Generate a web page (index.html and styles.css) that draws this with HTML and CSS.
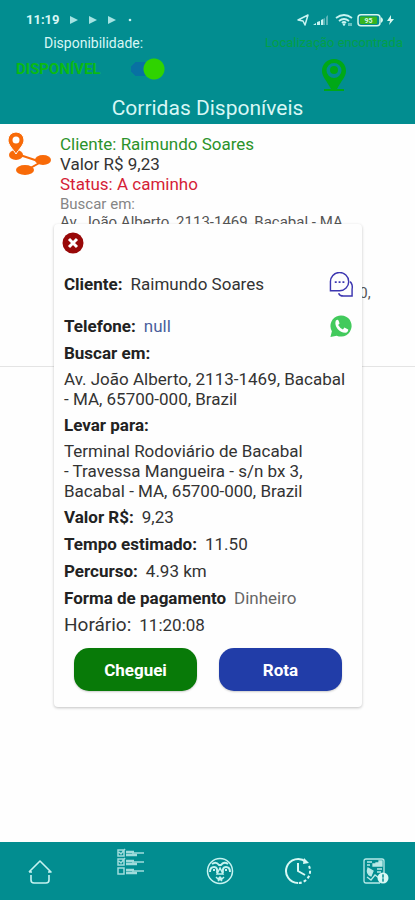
FILE: index.html
```html
<!DOCTYPE html>
<html lang="pt-BR">
<head>
<meta charset="utf-8">
<meta name="viewport" content="width=device-width, initial-scale=1">
<title>Corridas Disponíveis</title>
<link rel="stylesheet" href="styles.css">
</head>
<body>
<header class="header">
  <div class="status">
    <span class="clock">11:19</span>
    <svg class="plays" viewBox="0 0 66 10"><path d="M1 1v8l8-4zM20 1v8l8-4zM39 1v8l8-4z" fill="#a5e3e2"/><circle cx="61" cy="5" r="1.3" fill="#c8f3f1"/></svg>
    <svg class="signals" viewBox="0 0 98 14" fill="none">
      <path d="M1 7 11 2 8 12 6 8z" stroke="#c8f3f1" stroke-width="1.5" stroke-linejoin="round"/>
      <path d="M16 12l3-2v2zM20 12V9l3-1v4zM24 12V7l2-1v6z" fill="#c8f3f1"/>
      <path d="M26 12V6l2-1v7zM29 12V4l2-2v10z" fill="#5bb5b8"/>
      <path d="M39 5q8-6 16 0M42 8q5-4 10 0M45 10q2-2 4 0" stroke="#c8f3f1" stroke-width="1.8"/>
      <circle cx="47" cy="11.500" r="1.200" fill="#c8f3f1"/><path d="M52 10v3M54 10v3" stroke="#c8f3f1"/>
      <rect x="61" y="1.700" width="22" height="11" rx="3" stroke="#d8f7ef" stroke-width="1.500"/>
      <rect x="63" y="3.500" width="17" height="7.500" rx="1" fill="#35b51f"/>
      <path d="M84 4q4 3 0 6z" fill="#d8f7ef"/>
      <text x="71.500" y="10" text-anchor="middle" class="battery">95</text>
      <path d="m94 2-4 6h3l-1 4 5-6h-3z" fill="#d8f7ef"/>
    </svg>
  </div>
  <div class="panels">
    <div class="availability">
      <span class="caption" id="avail">Disponibilidade:</span>
      <div class="toggle-row">
        <span class="available">DISPONÍVEL</span>
        <input class="switch" type="checkbox" role="switch" checked aria-labelledby="avail">
      </div>
    </div>
    <div class="location">
      <span class="caption found">Localização encontrada</span>
      <svg class="pin" viewBox="0 0 26 34"><path fill="#00a817" fill-rule="evenodd" d="M13 1C6 1 1 6 1 13c0 6 5 10 9 18h6c4-8 9-12 9-18C25 6 20 1 13 1zm0 4a7.500 7.500 0 1 1 0 15 7.500 7.500 0 0 1 0-15z"/><circle cx="13" cy="12" r="4" fill="#00a817"/><path d="M3 32h20" stroke="#00a817" stroke-width="2"/></svg>
    </div>
  </div>
  <h1 class="title">Corridas Disponíveis</h1>
</header>
<main class="main">
  <article class="ride">
    <svg class="route" viewBox="0 0 44 46"><g fill="#f86a08" stroke="#f86a08"><path d="M9 22 33 30 17 39" fill="none" stroke-width="2"/><ellipse cx="8" cy="23" rx="7" ry="5" stroke="none"/><path d="M8 22C5 17 0 13 0 8a8 8 0 0 1 16 0c0 5-5 9-8 14z" stroke="#fff" stroke-width="1"/><ellipse cx="35" cy="28" rx="8" ry="5" stroke="none"/><ellipse cx="17" cy="38" rx="9" ry="5" stroke="none"/></g><circle cx="8" cy="8" r="3.500" fill="#fff"/></svg>
    <div class="ride-text">
      <p class="client">Cliente: Raimundo Soares</p>
      <p>Valor R$ 9,23</p>
      <p class="state">Status: A caminho</p>
      <p class="muted">Buscar em:</p>
      <p class="address">Av. João Alberto, 2113-1469, Bacabal - MA,<br>65700-000, Brazil</p>
      <p class="muted">Levar para:</p>
      <p class="address">Terminal Rodoviário de Bacabal<br>Travessa Mangueira, Bacabal - MA, 65700-000,<br>Brazil</p>
    </div>
  </article>
  <section class="dialog" role="dialog" aria-label="Detalhes da corrida">
    <button class="close" aria-label="Fechar"><svg viewBox="0 0 22 22"><circle cx="11" cy="11" r="10.500" fill="#980808"/><path d="m7 7 8 8m0-8-8 8" stroke="#fff" stroke-width="3"/></svg></button>
    <div class="contact">
      <p><b>Cliente:</b><span>Raimundo Soares</span></p>
      <a href="#chat" aria-label="Conversar"><svg viewBox="0 0 26 26" fill="none" stroke="#3c36b0" stroke-width="1.500"><path d="M1.500 19.500v-9a9.500 9.500 0 1 1 9.500 9z"/><path d="M22 10q3 3 2 8v7H15q-4 0-5-3"/><path d="M6 10.500h2m2 0h2m2 0h2" stroke-width="2"/></svg></a>
    </div>
    <div class="contact">
      <p><b>Telefone:</b><a class="phone" href="#telefone">null</a></p>
      <a href="#whatsapp" aria-label="WhatsApp"><svg viewBox="0 0 26 26"><path d="M1.500 24 3 18A11 11 0 1 1 8 22.500z" fill="#42ca5c"/><path d="M7 7q2-2 3 0l1 3-1.500 1.500q2 3.500 5 4.500l1.500-2 4 2q0 3-3 3.500C11 19.500 5 13 7 7z" fill="#fff"/></svg></a>
    </div>
    <p class="row"><b>Buscar em:</b></p>
    <p class="row">Av. João Alberto, 2113-1469, Bacabal<br>- MA, 65700-000, Brazil</p>
    <p class="row"><b>Levar para:</b></p>
    <p class="row">Terminal Rodoviário de Bacabal<br>- Travessa Mangueira - s/n bx 3,<br>Bacabal - MA, 65700-000, Brazil</p>
    <p class="row data"><b>Valor R$:</b><span>9,23</span></p>
    <p class="row data"><b>Tempo estimado:</b><span>11.50</span></p>
    <p class="row data"><b>Percurso:</b><span>4.93 km</span></p>
    <p class="row data"><b>Forma de pagamento</b><span class="payment">Dinheiro</span></p>
    <p class="row data"><span class="time-label">Horário:</span><span>11:20:08</span></p>
    <div class="actions">
      <button class="action arrive">Cheguei</button>
      <button class="action directions">Rota</button>
    </div>
  </section>
</main>
<nav class="nav">
  <a href="#inicio" aria-label="Início"><svg viewBox="0 0 28 28" fill="none" stroke="#c5f2f0" stroke-width="1.600" stroke-linejoin="round"><path d="M3 15 14 4l11 11h-3M3 15h3M5 18v5q0 3 3 3h12q3 0 3-3v-5"/></svg></a>
  <a class="active" href="#corridas" aria-label="Corridas"><svg viewBox="0 0 28 28" fill="none" stroke="#a0dcdc" stroke-width="1.500"><path d="M2 2h6v6H2zM2 11h6v6H2zM2 20h6v6H2zM3 4l2 2 4-5M3 13l2 2 4-5"/><path d="M10 4h8M10 7h11M10 13h8M10 16h11M10 22h8M10 25h11" stroke-width="2.500"/><path d="M16 5h12M16 14h12M16 23h12" stroke-width="1.500"/></svg></a>
  <a href="#perfil" aria-label="Motorista"><svg viewBox="0 0 28 28" fill="none" stroke="#c5f2f0" stroke-width="1.500"><circle cx="14" cy="14" r="12.500"/><path d="M4 15q0-5 4-5 4 0 3 6M24 15q0-5-4-5-4 0-3 6M6 7q4-3 7 1h2q3-4 7-1M7 13h2M19 13h2" stroke-width="2"/><path d="m14 11-3 6h6zM10 20l2 2 2-2 2 2 2-2M12 24l2-2 2 2"/></svg></a>
  <a href="#historico" aria-label="Histórico"><svg viewBox="0 0 28 28" fill="none" stroke="#d8f8f4" stroke-width="2"><path d="M14 26A12 12 0 1 1 22 5"/><path d="M25 9a12 12 0 0 1-11 17" stroke-dasharray="3 2"/><path d="M14 6v8l7 4"/><path d="m20 1 5 5-6 1z" fill="#d8f8f4" stroke="none"/></svg></a>
  <a href="#relatorio" aria-label="Relatório"><svg viewBox="0 0 28 28" fill="none" stroke="#b8e9e7" stroke-width="1.300"><path d="M18 26H4q-2 0-2-2V4q0-2 2-2h16q2 0 2 2v12"/><path d="M5 5h5M5 8h3M15 12h5M15 15h4M5 20l4 3 4-5 4 3"/><path d="M11 9V7h2v2zM14 9V6h2v3zM17 9V4h3v5zM6 11l5 3-2 5q-5-2-3-8z" fill="#b8e9e7"/><circle cx="21" cy="21" r="5.500" fill="#d8f8f4" stroke="none"/><path d="M21 17v8M20 19h2M20 23h2" stroke="#028d90" stroke-width="1"/></svg></a>
</nav>
</body>
</html>
```
FILE: styles.css
```css
* { box-sizing: border-box; }
body {
  margin: 0;
  min-height: 100vh;
  display: flex;
  flex-direction: column;
  background: #fefefe;
  color: #333;
  font: 17px/20px Roboto, "Liberation Sans", sans-serif;
}
p, h1 { margin: 0; }
svg { display: block; }
button { border: 0; padding: 0; font: inherit; cursor: pointer; }
a { color: inherit; text-decoration: none; }

.header { background: #028d90; padding: 10px 0 2px; }
.status { display: flex; align-items: center; height: 20px; padding: 0 20px 0 26px; }
.clock { color: #d8f7f5; font-size: 13px; font-weight: 700; }
.plays { width: 66px; height: 10px; margin-left: 9px; }
.signals { width: 98px; height: 14px; margin-left: auto; }
.battery { font-size: 7px; font-weight: 700; fill: #d8f7ef; }
.panels { display: flex; justify-content: space-between; height: 64px; padding: 4px 12px 0 16px; }
.caption { font-size: 13px; line-height: 18px; color: #d8f7f5; white-space: nowrap; }
.availability .caption { display: block; padding-left: 28px; font-size: 14px; }
.toggle-row { display: flex; align-items: center; height: 34px; gap: 30px; }
.available { color: #0aba14; font-size: 15px; font-weight: 700; }
.switch {
  appearance: none;
  margin: 0;
  width: 34px;
  height: 22px;
  background:
    radial-gradient(circle at 23px 11px, #2fd300 10px, transparent 11px),
    linear-gradient(#0871a2, #0871a2) 6px center / 18px 14px no-repeat,
    radial-gradient(circle at 7px 11px, #0871a2 7px, transparent 7px);
}
.location { display: flex; flex-direction: column; align-items: center; }
.found { color: #02a048; }
.pin { width: 26px; height: 34px; margin-top: 6px; }
.title { color: #d8f7f5; font-size: 21px; line-height: 28px; font-weight: 400; text-align: center; }

.main { position: relative; flex: 1; }
.ride { display: flex; height: 243px; padding: 8px 8px 0; gap: 8px; border-bottom: 1px solid #e4e4e4; }
.route { width: 44px; height: 46px; flex: none; }
.ride-text { padding-top: 2px; }
.client { color: #2b922b; }
.state { color: #d51d36; }
.muted { color: #858585; font-size: 15px; }
.address { color: #555; font-size: 15px; line-height: 17px; white-space: nowrap; }

.dialog {
  position: absolute;
  top: 100px;
  left: 54px;
  right: 53px;
  padding: 8px 8px 16px 10px;
  display: flex;
  flex-direction: column;
  background: #fefefe;
  border-radius: 4px;
  box-shadow: 0 1px 3px rgba(0, 0, 0, .24);
}
.close { align-self: flex-start; width: 22px; height: 22px; margin-bottom: 9px; margin-left: -2px; background: none; }
.contact { display: flex; align-items: center; justify-content: space-between; height: 42px; }
.contact + .row { margin-top: -4px; }
.contact svg { width: 25px; height: 25px; }
b { color: #222; font-weight: 700; }
b + span, b + a, .time-label + span { margin-left: 8px; }
.phone { color: #4a5e9c; }
.row { margin-bottom: 6px; }
.data { margin-bottom: 7px; }
.payment { color: #666; }
.time-label { font-size: 19px; }
.actions { display: grid; grid-template-columns: 1fr 1fr; gap: 22px; padding: 6px 12px 0 10px; }
.action { height: 43px; border-radius: 15px; color: #fff; font-weight: 700; box-shadow: 0 1px 2px rgba(0, 0, 0, .2); }
.arrive { background: #087a08; }
.directions { background: #213da8; }

.nav { display: grid; grid-template-columns: 78px 102px 78px 78px 78px; justify-content: center; align-items: center; justify-items: center; height: 58px; background: #028d90; }
.nav svg { width: 28px; height: 28px; }
.active { align-self: start; padding-top: 6px; }
```
